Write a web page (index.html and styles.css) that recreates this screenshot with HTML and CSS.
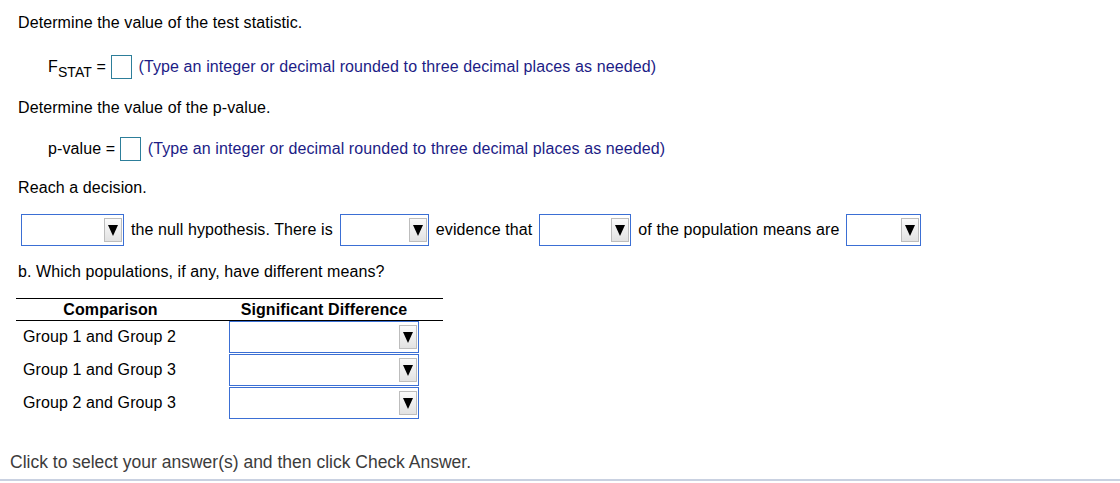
FILE: index.html
```html
<!DOCTYPE html>
<html>
<head>
<meta charset="utf-8">
<link rel="stylesheet" href="styles.css">
</head>
<body>
<div class="q">
  <p class="l1">Determine the value of the test statistic.</p>
  <div class="ans ans-f">
    <span class="lbl">F<sub>STAT</sub> = </span><span class="box"></span><span class="hint">(Type an integer or decimal rounded to three decimal places as needed)</span>
  </div>
  <p class="l2">Determine the value of the p-value.</p>
  <div class="ans ans-p">
    <span class="lbl">p-value = </span><span class="box"></span><span class="hint">(Type an integer or decimal rounded to three decimal places as needed)</span>
  </div>
  <p class="l3">Reach a decision.</p>
  <div class="ddrow">
    <span class="dd w1"><span class="btn"><svg width="10" height="11" viewBox="0 0 10 11"><polygon points="0,0 10,0 5,11" fill="#000"/></svg></span></span>
    <span class="txt">the null hypothesis. There is</span>
    <span class="dd w2"><span class="btn"><svg width="10" height="11" viewBox="0 0 10 11"><polygon points="0,0 10,0 5,11" fill="#000"/></svg></span></span>
    <span class="txt">evidence that</span>
    <span class="dd w3"><span class="btn"><svg width="10" height="11" viewBox="0 0 10 11"><polygon points="0,0 10,0 5,11" fill="#000"/></svg></span></span>
    <span class="txt">of the population means are</span>
    <span class="dd w4"><span class="btn"><svg width="10" height="11" viewBox="0 0 10 11"><polygon points="0,0 10,0 5,11" fill="#000"/></svg></span></span>
  </div>
  <p class="l4">b. Which populations, if any, have different means?</p>
  <table class="cmp">
    <thead>
      <tr><th class="c1">Comparison</th><th class="c2">Significant Difference</th></tr>
    </thead>
    <tbody>
      <tr><td class="c1">Group 1 and Group 2</td><td class="c2"><span class="dd wt"><span class="btn"><svg width="10" height="11" viewBox="0 0 10 11"><polygon points="0,0 10,0 5,11" fill="#000"/></svg></span></span></td></tr>
      <tr><td class="c1">Group 1 and Group 3</td><td class="c2"><span class="dd wt"><span class="btn"><svg width="10" height="11" viewBox="0 0 10 11"><polygon points="0,0 10,0 5,11" fill="#000"/></svg></span></span></td></tr>
      <tr><td class="c1">Group 2 and Group 3</td><td class="c2"><span class="dd wt"><span class="btn"><svg width="10" height="11" viewBox="0 0 10 11"><polygon points="0,0 10,0 5,11" fill="#000"/></svg></span></span></td></tr>
    </tbody>
  </table>
</div>
<div class="footer">Click to select your answer(s) and then click Check Answer.</div>
</body>
</html>
```

FILE: styles.css
```css
html, body {
  margin: 0;
  padding: 0;
  background: #fff;
}
body {
  font-family: "Liberation Sans", Arial, sans-serif;
  font-size: 16px;
  line-height: 18px;
  letter-spacing: 0.1px;
  color: #000;
  width: 1120px;
  height: 483px;
  overflow: hidden;
}
.q {
  padding-left: 18px;
}
p {
  margin: 0;
  height: 18px;
}
.l1 { margin-top: 14px; }
.l2 { margin-top: 20px; }
.l3 { margin-top: 18px; }
.l4 { margin-top: 17px; }

.ans {
  display: flex;
  align-items: center;
  padding-left: 30px;
  height: 24px;
  white-space: pre;
}
.ans-f { margin-top: 23px; }
.ans-p { margin-top: 20px; }
.lbl sub {
  font-size: 14px;
  vertical-align: -5px;
  line-height: 0;
}
.box {
  display: inline-block;
  width: 21px;
  height: 24px;
  box-sizing: border-box;
  border: 1px solid #2d7e9a;
  background: #fff;
}
.hint {
  margin-left: 7px;
  color: #1c1c86;
}

.ddrow {
  margin-top: 17px;
  padding-left: 3px;
  display: flex;
  align-items: center;
  height: 32px;
}
.txt {
  margin: 0 7px;
  white-space: nowrap;
}
.dd {
  display: inline-flex;
  justify-content: flex-end;
  align-items: center;
  height: 32px;
  box-sizing: border-box;
  border: 1px solid #3b6fd4;
  background: #fff;
  padding-right: 1px;
}
.w1 { width: 103px; }
.w2 { width: 89px; }
.w3 { width: 92px; }
.w4 { width: 75px; }
.wt { width: 190px; }
.btn {
  display: inline-flex;
  align-items: center;
  justify-content: center;
  width: 18px;
  height: 24px;
  box-sizing: border-box;
  border: 1px solid #bdbdbd;
  background: linear-gradient(#fbfbfb, #e2e2e2);
}

.cmp {
  margin-top: 17px;
  margin-left: -2px;
  border-collapse: collapse;
  width: 427px;
}
.cmp th {
  font-weight: bold;
  height: 21px;
  padding: 0;
  text-align: center;
  border-top: 1px solid #000;
  border-bottom: 1px solid #000;
}
.cmp th.c1 { width: 189px; }
.cmp td {
  padding: 0 0 1px 0;
  vertical-align: middle;
}
.cmp td.c1 {
  padding-left: 7px;
}
.cmp td.c2 {
  text-align: center;
  line-height: 0;
}
.cmp td.c2 .dd {
  vertical-align: middle;
}

.footer {
  margin-top: 32px;
  padding-left: 10px;
  color: #3c3c3c;
  font-size: 17.5px;
  line-height: 20px;
  letter-spacing: 0;
  height: 20px;
  padding-bottom: 7px;
  border-bottom: 2px solid #c9d1e1;
}
```
